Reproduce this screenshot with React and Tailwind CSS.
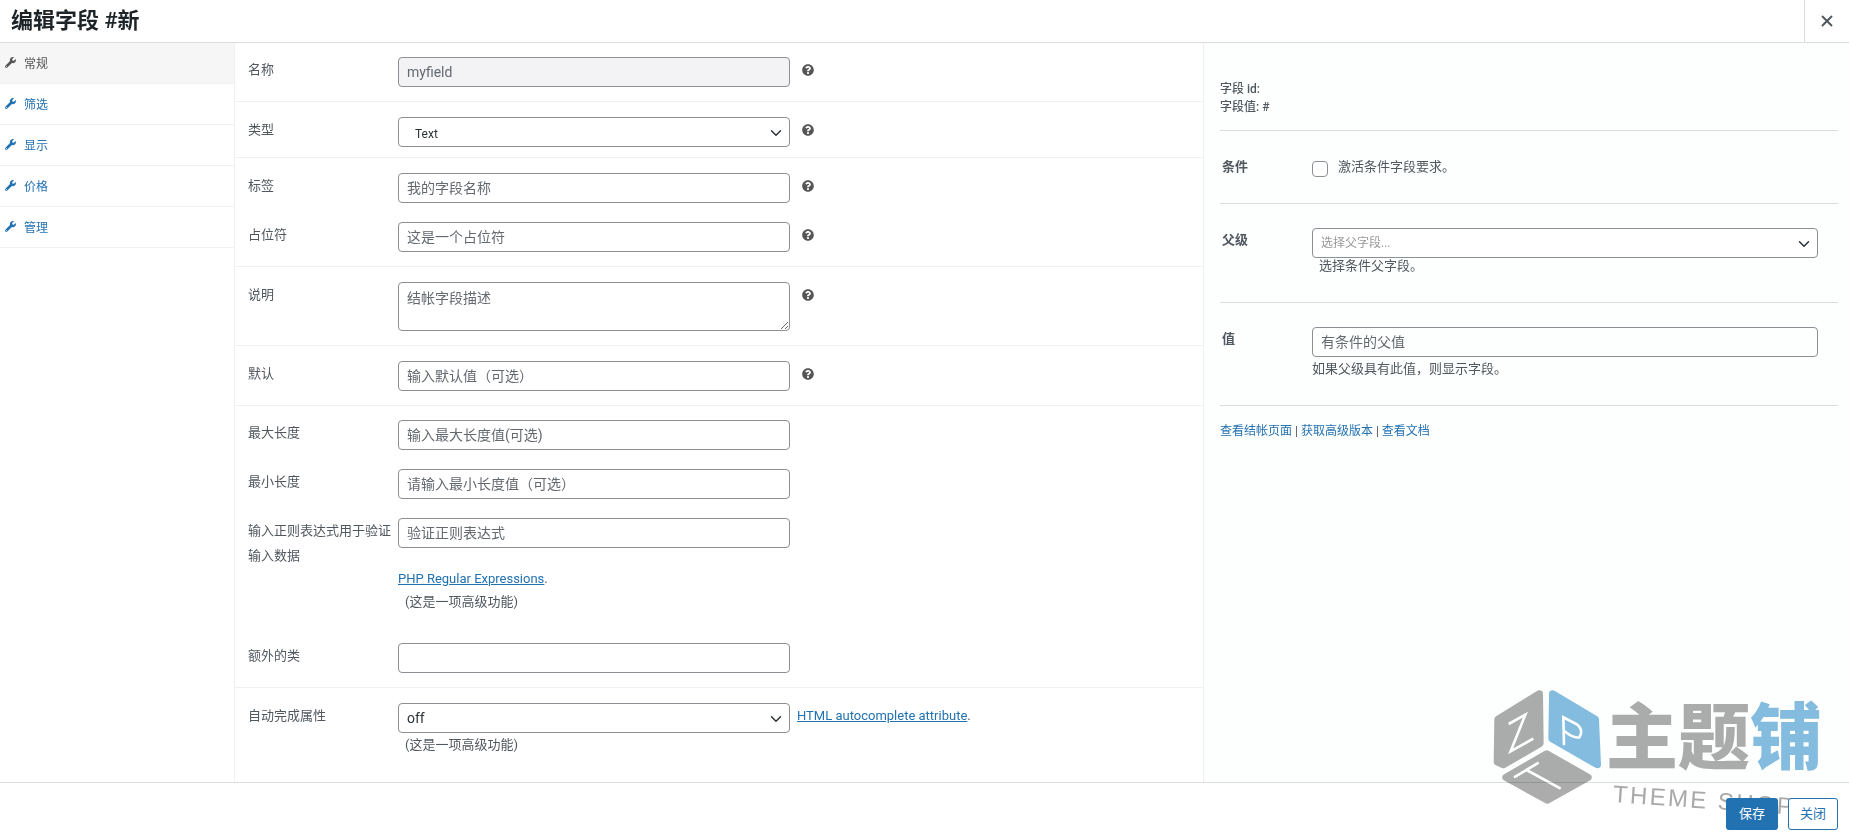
import React from "react";
import { X, ChevronDown } from "lucide-react";
import { FaWrench, FaQuestionCircle } from "react-icons/fa";

const tabs = ["常规", "筛选", "显示", "价格", "管理"];

const inputClass =
  "h-[30px] w-full rounded-[4px] border border-[#8c8f94] px-2 text-[14px] text-[#50575e] placeholder:text-[#646970] outline-none";

function Field({ label, help, leading = "leading-[25px]", children }) {
  return (
    <div className="flex items-start">
      <label className={`w-[150px] shrink-0 text-[13px] text-[#50575e] ${leading}`}>{label}</label>
      <div className="w-[392px] shrink-0">{children}</div>
      {help && <FaQuestionCircle className="ml-[12px] mt-[7px] text-[12px] text-[#555]" />}
    </div>
  );
}

function Select({ className, options }) {
  return (
    <div className="relative">
      <select className={`h-[30px] w-full appearance-none rounded-[4px] border border-[#8c8f94] bg-white outline-none ${className}`}>
        {options.map((o) => (
          <option key={o}>{o}</option>
        ))}
      </select>
      <ChevronDown size={18} strokeWidth={2} className="pointer-events-none absolute right-[5px] top-[7px] text-[#2c3338]" />
    </div>
  );
}

function Section({ className, children }) {
  return <div className={`border-b border-[#f0f0f1] pl-[13px] ${className}`}>{children}</div>;
}

function Watermark() {
  return (
    <div className="pointer-events-none absolute left-[1490px] top-[680px] h-[150px] w-[340px] mix-blend-multiply">
      <svg viewBox="0 0 480 450" className="absolute left-0 top-0 h-[150px] w-[160px]">
        <g strokeLinejoin="round" strokeWidth="22">
          <path d="M148 42L24 118L22 246L40 254L150 190Z" fill="#acacac" stroke="#acacac" />
          <path d="M188 42L316 118L322 254L186 176Z" fill="#85bde0" stroke="#85bde0" />
          <path d="M170 222L294 292L172 360L48 292Z" fill="#acacac" stroke="#acacac" />
        </g>
        <g fill="none" stroke="#fff" strokeWidth="8" strokeLinejoin="miter">
          <path d="M56 132L106 104L62 214L130 176" />
          <path d="M222 196L220 112L262 134Q282 150 268 172Q250 176 224 154" />
          <path d="M72 292L146 248M110 270L212 326" />
        </g>
      </svg>
      <div className="absolute left-[116px] top-[15px] whitespace-nowrap text-[72px] font-black leading-[88px] text-[#acacac]">
        主题<span className="text-[#85bde0]">铺</span>
      </div>
      <div className="absolute left-[123px] top-[99px] origin-left rotate-[4deg] whitespace-nowrap font-['Liberation_Sans',sans-serif] text-[24px] leading-[30px] tracking-[2.4px] text-[#a9a9a9]">
        THEME SHOP
      </div>
    </div>
  );
}

export default function App() {
  return (
    <div className="relative flex h-screen flex-col overflow-hidden bg-white font-['Roboto','Noto_Sans_CJK_SC',sans-serif] text-[13px] text-[#50575e]">
      {/* header */}
      <div className="flex h-[43px] shrink-0 items-stretch justify-between border-b border-[#dcdcde]">
        <h1 className="pl-[11px] text-[22px] font-semibold leading-[41px] text-[#1d2327]">编辑字段 #新</h1>
        <button className="flex w-[45px] items-center justify-center border-l border-[#dcdcde] text-[#50575e]">
          <X size={18} strokeWidth={2.5} />
        </button>
      </div>

      <div className="flex min-h-0 flex-1">
        {/* tabs */}
        <div className="w-[235px] shrink-0 border-r border-[#f0f0f1]">
          {tabs.map((t, i) => (
            <div
              key={t}
              className={`flex h-[41px] items-center gap-[8px] border-b border-[#f0f0f1] pl-[5px] pt-[2px] text-[12px] ${
                i === 0 ? "bg-[#f6f6f6] text-[#555]" : "text-[#2271b1]"
              }`}
            >
              <FaWrench className="-mt-[3px] text-[11px]" />
              {t}
            </div>
          ))}
        </div>

        {/* main form */}
        <div className="w-[969px] shrink-0 border-r border-[#f0f0f1]">
          <Section className="pb-[14px] pt-[14px]">
            <Field label="名称" help>
              <input className={`${inputClass} bg-[#f3f3f5] text-[#646970]`} defaultValue="myfield" disabled />
            </Field>
          </Section>
          <Section className="pb-[10px] pt-[15px]">
            <Field label="类型" help>
              <Select className="pl-[16px] pt-[3px] text-[12px] text-[#2c3338]" options={["Text"]} />
            </Field>
          </Section>
          <Section className="flex flex-col gap-[19px] pb-[14px] pt-[15px]">
            <Field label="标签" help>
              <input className={inputClass} placeholder="我的字段名称" />
            </Field>
            <Field label="占位符" help>
              <input className={inputClass} placeholder="这是一个占位符" />
            </Field>
          </Section>
          <Section className="pb-[14px] pt-[15px]">
            <Field label="说明" help>
              <textarea
                className="block h-[49px] w-full rounded-[4px] border border-[#8c8f94] bg-white px-2 pb-[2px] pt-[5px] text-[14px] text-[#50575e] outline-none placeholder:text-[#646970]"
                placeholder="结帐字段描述"
              />
            </Field>
          </Section>
          <Section className="pb-[14px] pt-[15px]">
            <Field label="默认" help>
              <input className={inputClass} placeholder="输入默认值（可选）" />
            </Field>
          </Section>
          <Section className="pb-[14px] pt-[14px]">
            <div className="flex flex-col gap-[19px]">
              <Field label="最大长度">
                <input className={inputClass} placeholder="输入最大长度值(可选)" />
              </Field>
              <Field label="最小长度">
                <input className={inputClass} placeholder="请输入最小长度值（可选）" />
              </Field>
              <Field label="输入正则表达式用于验证输入数据">
                <input className={inputClass} placeholder="验证正则表达式" />
                <div className="mt-[21px] leading-[20px]">
                  <a className="text-[#2271b1] underline">PHP Regular Expressions</a>.
                </div>
                <div className="mt-[3px] pl-[7px] leading-[20px]">(这是一项高级功能)</div>
              </Field>
            </div>
            <div className="mt-[31px]">
              <Field label="额外的类">
                <input className={inputClass} />
              </Field>
            </div>
          </Section>
          <div className="pl-[13px] pt-[15px]">
            <div className="flex items-start">
              <label className="w-[150px] shrink-0 leading-[25px]">自动完成属性</label>
              <div className="w-[392px] shrink-0">
                <Select className="pl-2 text-[14px] text-[#2c3338]" options={["off"]} />
                <div className="mt-[2px] pl-[7px] leading-[20px]">(这是一项高级功能)</div>
              </div>
              <div className="ml-[7px] leading-[26px]">
                <a className="text-[#2271b1] underline">HTML autocomplete attribute</a>.
              </div>
            </div>
          </div>
        </div>

        {/* conditions panel */}
        <div className="min-w-0 flex-1 bg-[#fdfefe] pl-[16px] pr-[11px]">
          <div className="border-b border-[#dcdcde] pb-[14px] pt-[37px] text-[12px] font-medium leading-[18px]">
            <div>字段 id:</div>
            <div>字段值: #</div>
          </div>
          <div className="flex h-[73px] items-start border-b border-[#dcdcde] pl-[2px] pt-[26px]">
            <label className="w-[90px] shrink-0 font-semibold leading-[20px]">条件</label>
            <input type="checkbox" className="mt-[4px] h-4 w-4 appearance-none rounded-[4px] border border-[#8c8f94] bg-white" />
            <span className="ml-[10px] leading-[20px]">激活条件字段要求。</span>
          </div>
          <div className="flex h-[99px] items-start border-b border-[#dcdcde] pl-[2px] pt-[24px]">
            <label className="w-[90px] shrink-0 font-semibold leading-[24px]">父级</label>
            <div className="w-[506px]">
              <Select className="pl-2 text-[12px] text-[#999]" options={["选择父字段..."]} />
              <div className="pl-[7px] leading-[16px]">选择条件父字段。</div>
            </div>
          </div>
          <div className="flex h-[103px] items-start border-b border-[#dcdcde] pl-[2px] pt-[24px]">
            <label className="w-[90px] shrink-0 font-semibold leading-[24px]">值</label>
            <div className="w-[506px]">
              <input className={inputClass} placeholder="有条件的父值" />
              <div className="mt-[4px] leading-[16px]">如果父级具有此值，则显示字段。</div>
            </div>
          </div>
          <div className="pt-[17px] text-[12px] leading-[16px]">
            <a className="text-[#2271b1]">查看结帐页面</a> | <a className="text-[#2271b1]">获取高级版本</a> |{" "}
            <a className="text-[#2271b1]">查看文档</a>
          </div>
        </div>
      </div>

      {/* footer */}
      <div className="flex h-[56px] shrink-0 items-start justify-end gap-[10px] border-t border-[#dcdcde] pr-[11px] pt-[15px]">
        <button className="relative z-10 h-[32px] w-[52px] rounded-[3px] bg-[#2271b1] text-white">保存</button>
        <button className="relative z-10 h-[32px] w-[50px] rounded-[3px] border border-[#2271b1] bg-white text-[#2271b1]">关闭</button>
      </div>

      <Watermark />
    </div>
  );
}
